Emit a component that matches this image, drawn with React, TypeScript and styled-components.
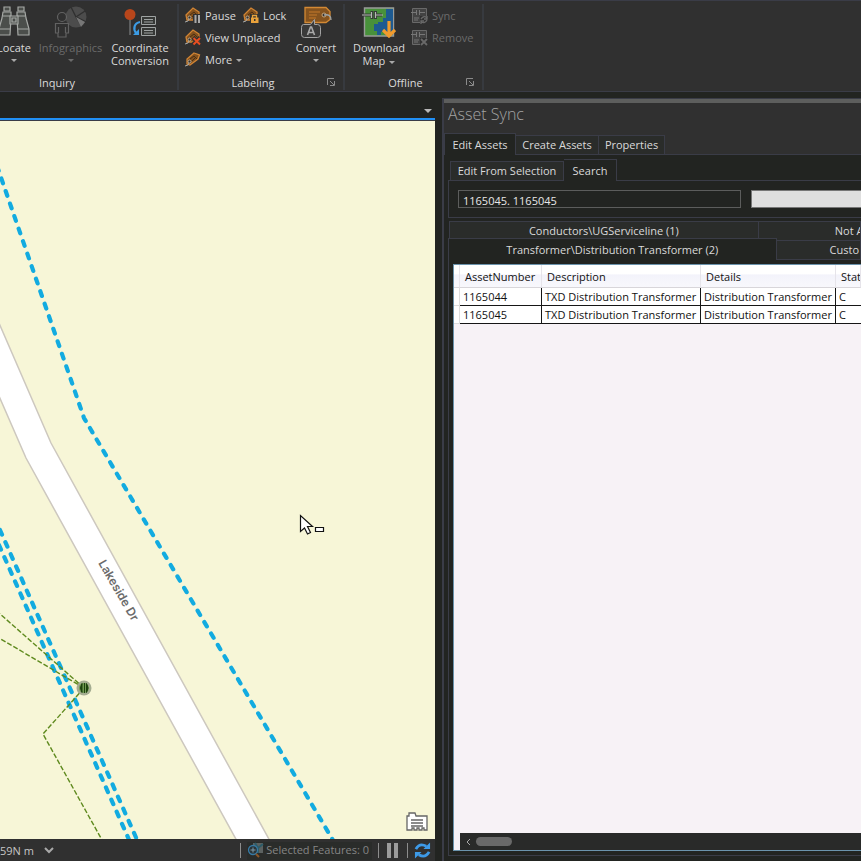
import React from 'react';
import styled, { createGlobalStyle, css } from 'styled-components';

const c = {
  bar: '#303030',
  dark: '#222421',
  tab: '#2a2c2a',
  line: '#3a3c47',
  text: '#dadada',
  dim: '#6b6b6b',
  accent: '#2190f5',
};

const Global = createGlobalStyle`
  * { box-sizing: border-box; }
  html, body { margin: 0; background: ${c.dark}; }
  body, button, input, table {
    font-family: "Open Sans", "Noto Sans", sans-serif;
    font-size: 11px;
    line-height: 13px;
  }
  button { margin: 0; padding: 0; border: 0; background: none; color: inherit; text-align: inherit; white-space: nowrap; }
  svg { display: block; flex: none; }
`;

const Shell = styled.div`
  display: grid;
  grid-template-rows: auto minmax(0, 1fr);
  height: 100vh;
  overflow: hidden;
  background: ${c.dark};
  color: ${c.text};
`;

/* ---------- ribbon ---------- */

const Ribbon = styled.header`
  display: flex;
  border-top: 1px solid ${c.line};
  border-bottom: 1px solid ${c.line};
  background: ${c.bar};
`;

const Group = styled.section<{ $width: number }>`
  display: grid;
  grid-template-columns: minmax(0, 1fr);
  grid-template-rows: 71px 16px;
  flex: none;
  width: ${(p) => p.$width}px;
  padding: 2px 0 1px;
  overflow: hidden;
  border-right: 2px solid #373a3f;
  border-image: linear-gradient(transparent 4px, #373a3f 4px, #373a3f 88px, transparent 88px) 1;
`;

const Tools = styled.div<{ $end?: boolean }>`
  display: flex;
  align-items: flex-start;
  justify-content: ${(p) => (p.$end ? 'flex-end' : 'flex-start')};
  gap: 4px;
  padding: 0 6px;
`;

const GroupFoot = styled.div<{ $reserve?: number }>`
  display: grid;
  grid-template-columns: 1fr ${(p) => p.$reserve ?? 16}px;
  align-items: center;
  text-align: center;
`;

const Large = styled.button<{ $width: number }>`
  display: flex;
  flex: none;
  flex-direction: column;
  align-items: center;
  width: ${(p) => p.$width}px;
  text-align: center;
  &:disabled { color: ${c.dim}; }
  svg { margin: 1px 0 3px; }
`;

const Arrow = styled.span<{ $inline?: boolean }>`
  border: 3px solid transparent;
  border-top-color: #a9a9a9;
  border-bottom: 0;
  ${(p) => (p.$inline ? css`display: inline-block; margin-left: 4px; vertical-align: middle;` : css`margin-top: 5px;`)}
  button:disabled & { border-top-color: #6b6b6b; }
`;

const SmallStack = styled.div<{ $width: number }>`
  display: flex;
  flex: none;
  flex-direction: column;
  width: ${(p) => p.$width}px;
  padding-top: 2px;
`;

const SmallRow = styled.div`
  display: flex;
  gap: 7px;
  height: 22px;
`;

const Small = styled.button`
  display: flex;
  align-items: center;
  gap: 4px;
  height: 20px;
  &:disabled { color: ${c.dim}; }
`;

const Binoculars = () => (
  <svg width="32" height="34" viewBox="0 0 32 34" fill="#4b4e4b" stroke="#a5a8a5" strokeWidth="1.2">
    <path d="M6 3h6v4h-6zM20 3h6v4h-6z" />
    <path d="M5 8h8v6l-1 17H1V25l3-11zM19 8h8l1 6 3 11v6H20l-1-17z" />
    <path d="M1 25h11M20 25h11M5 12h8M19 12h8" />
    <path d="M12 12h8v8h-8zM14 14h4v4h-4z" />
  </svg>
);

const Infographics = () => (
  <svg width="34" height="34" viewBox="0 0 34 34" fill="none" stroke="#626262" strokeWidth="1.2">
    <circle cx="22" cy="13" r="10.5" fill="#4c4c4c" stroke="none" />
    <path d="M22 13 17 3M22 13l9-6M22 13l10 5M22 13l6 10" stroke="#303030" strokeWidth="1.4" />
    <path d="M22 13l9 5-4 5z" fill="#777" stroke="none" />
    <circle cx="8" cy="13" r="4.5" fill="#303030" />
    <path d="M1.500 19.500h13V29H12v4H4v-4H1.500zM4.500 23v6M11.500 23v6" fill="#303030" />
  </svg>
);

const Coordinate = () => (
  <svg width="34" height="34" viewBox="0 0 34 34" fill="none">
    <path d="M7 12v19" stroke="#8b8f90" />
    <circle cx="7" cy="10.500" r="5.500" fill="#b8461b" />
    <path d="M17 18c-6 1-7 7-4 11" stroke="#3b9be4" strokeWidth="2.200" />
    <path d="M10 31h6v-6z" fill="#3b9be4" />
    <path d="M18.500 12.500h14v8h-14zM18.500 23.500h14v8h-14z" stroke="#9fa3a3" fill="#363836" />
    <path d="M21 15.500h9M21 18h9M21 26.500h9M21 29h9" stroke="#9fa3a3" />
  </svg>
);

const TagIcon = ({ kind }: { kind: 'pause' | 'lock' | 'remove' | 'more' }) => (
  <svg width="16" height="18" viewBox="0 0 16 18" fill="none">
    <path
      d={kind === 'more' ? 'M9 3 14.500 5 13 9 5 15 2 14 2 9z' : 'M1 9 8 2l6 4v8H2z'}
      fill="#83511d" stroke="#d08434" strokeWidth="1.300"
    />
    <path d="M5 9l4-3 3 3M7 11l4-4" stroke="#4a2f14" />
    <path d="M0 16l3-1 2-4" stroke="#a5a8a8" />
    <circle cx="4.500" cy="11.500" r="1.500" fill="#303030" stroke="#b7a791" />
    {kind === 'pause' && <path d="M8 8h8v10H8z" fill="#303030" />}
    {kind === 'pause' && <path d="M10.500 9v8M14 9v8" stroke="#a9a9a9" strokeWidth="2" />}
    {kind === 'lock' && <path d="M7 8h9v10H7z" fill="#303030" />}
    {kind === 'lock' && <path d="M9.500 12V9.500h4V12" stroke="#e9a23b" strokeWidth="1.300" />}
    {kind === 'lock' && <path d="M8 11.500h7.500V17H8zM11 13h1.500v2H11z" fill="#e9a23b" fillRule="evenodd" />}
    {kind === 'remove' && <path d="M8 9.500l7 7M15 9.500l-7 7" stroke="#303030" strokeWidth="4" />}
    {kind === 'remove' && <path d="M8.500 10l6.500 6.500M15 10l-6.500 6.500" stroke="#e84e21" strokeWidth="2" />}
  </svg>
);

const ConvertIcon = () => (
  <svg width="32" height="34" viewBox="0 0 32 34" fill="none">
    <path d="M5 3.500h21l4 4v8l-4 3H5z" fill="#85531e" stroke="#d38934" strokeWidth="1.300" />
    <path d="M9 8h11M9 11h8M9 14h7" stroke="#c47b2b" />
    <circle cx="24" cy="11" r="2" fill="#303030" stroke="#c9a77a" />
    <path d="M24 11c5-1 7 1 7 5" stroke="#9fa3a3" strokeWidth="1.300" />
    <path d="M3.500 20.500h7l4-5v5h3q3 0 3 3v7q0 3-3 3h-13q-3 0-3-3v-7q0-3 2-3z" fill="#3a3a3a" stroke="#a3a3a3" />
    <path d="M7.500 31l3-8h1l3 8M8.500 28.500h5" stroke="#a9a9a9" strokeWidth="1.600" />
  </svg>
);

const DownloadIcon = () => (
  <svg width="34" height="34" viewBox="0 0 34 34" fill="none">
    <path d="M2.500 4h29v28h-29z" fill="#48913b" stroke="#999c99" strokeWidth="1.400" />
    <path d="M24 5h7v26h-8v-3h-4v3h-4v-4h-3v-7h4v-2h5v-4h3z" fill="#1d5a91" />
    <path d="M1 11h9M14 11h6M10 7v8M13.500 7v8M20 11h-6" stroke="#353b35" strokeWidth="3" />
    <path d="M0 11h9M14 11h7M9.500 8v6M13.500 8v6" stroke="#b5b9b5" strokeWidth="1.200" />
    <path d="M27 17v14M21 26l6 6 6-6" stroke="#f19b2c" strokeWidth="3.200" />
  </svg>
);

const OfflineIcon = ({ remove }: { remove?: boolean }) => (
  <svg width="17" height="17" viewBox="0 0 17 17" fill="none" stroke="#696969">
    <path d="M1.500 1.500h14v14h-14z" fill="#434343" />
    <path d="M0 5.500h5M8 5.500h6M5.500 3v5M8.500 3v5M3 11h5M3 13h4" stroke="#777" />
    <path d="M9 9h8v8H9z" fill="#303030" stroke="none" />
    {remove
      ? <path d="M10 10l6 6M16 10l-6 6" strokeWidth="1.800" />
      : <path d="M10 12q3-4 6-1M16 9v3h-3M16 13q-2 4-6 2M10 17v-3h3" strokeWidth="1.300" />}
  </svg>
);

const LauncherIcon = () => (
  <svg width="8" height="8" viewBox="0 0 8 8" fill="none" stroke="#8b8b8b">
    <path d="M.5 7V.5H7M3 3l4 4M7.500 3v4.500H3" />
  </svg>
);

/* ---------- workspace ---------- */

const Workspace = styled.main`
  display: grid;
  grid-template-columns: minmax(0, 435fr) minmax(0, 419fr);
  gap: 7px;
  min-height: 0;
`;

const MapPane = styled.section`
  display: grid;
  grid-template-rows: 26px minmax(0, 1fr) 22px;
  min-height: 0;
`;

const ViewBar = styled.div`
  display: flex;
  align-items: center;
  justify-content: flex-end;
  padding: 12px 3px 0;
`;

const ViewMenu = styled.button`
  border: 4px solid transparent;
  border-top-color: #b9b9b9;
  border-bottom: 0;
`;

const MapView = styled.div`
  position: relative;
  min-height: 0;
  overflow: hidden;
  border-top: 2px solid ${c.accent};
  background: #f7f6d7;
`;

const MapDrawing = styled.svg`
  width: 100%;
  height: 100%;
`;

const MapNotes = styled.button`
  position: absolute;
  right: 7px;
  bottom: 7px;
`;

const Status = styled.footer`
  display: flex;
  align-items: center;
  gap: 6px;
  padding: 1px 4px 0 0;
  background: ${c.bar};
  color: #c6c6c6;
`;

const Units = styled.button`
  display: flex;
  align-items: center;
  gap: 10px;
  margin-right: auto;
`;

const Rule = styled.span`
  width: 1px;
  height: 15px;
  background: #8d8d8d;
`;

const Selected = styled.div`
  display: flex;
  align-items: center;
  gap: 2px;
  padding: 0 3px 2px 0;
  background: #2a2c2a;
  color: #858585;
`;

/* ---------- asset panel ---------- */

const Panel = styled.aside`
  display: flex;
  flex-direction: column;
  min-width: 0;
  min-height: 0;
  margin-top: 6px;
  overflow: hidden;
  border-left: 2px solid ${c.line};
  border-top: 1px solid ${c.line};
`;

const PanelHead = styled.div`
  border-top: 4px solid #5d5e5d;
  background: ${c.bar};
`;

const Title = styled.h2`
  margin: 0;
  padding: 0 4px;
  color: #a3a3a3;
  font-size: 16px;
  font-weight: 300;
  line-height: 22px;
`;

const TabList = styled.div<{ $top: number; $left?: number }>`
  display: flex;
  align-items: flex-end;
  padding: ${(p) => p.$top}px 0 0 ${(p) => p.$left ?? 0}px;
  box-shadow: inset 0 -1px ${c.line};
`;

const Tab = styled.button<{ $width: number; $grow?: boolean; $lead?: number }>`
  flex: ${(p) => (p.$grow ? `${p.$width} 1 0` : `0 0 ${p.$width}px`)};
  min-width: 0;
  height: 20px;
  overflow: hidden;
  border: 1px solid ${c.line};
  border-left-width: 0;
  background: ${c.tab};
  text-align: ${(p) => (p.$lead ? 'left' : 'center')};
  text-indent: ${(p) => p.$lead ?? 0}px;
  line-height: 18px;
  &:first-child { border-left-width: 1px; }
  &[aria-selected='true'] {
    height: 22px;
    border-bottom: 0;
    background: ${c.dark};
    line-height: 21px;
  }
`;

const PanelBody = styled.div`
  display: flex;
  flex: 1;
  flex-direction: column;
  min-height: 0;
  padding: 4px 0 5px 4px;
`;

const SearchBox = styled.div`
  display: flex;
  gap: 10px;
  padding: 9px 0 9px 9px;
  border-left: 1px solid ${c.line};
  border-bottom: 1px solid ${c.line};
`;

const SearchInput = styled.input`
  flex: 273 1 0;
  min-width: 0;
  height: 18px;
  padding: 2px 4px 0;
  border: 1px solid #5c5d5c;
  border-radius: 0;
  outline: 0;
  background: ${c.dark};
  color: #e8e8e8;
`;

const SearchButton = styled.button`
  flex: 109 1 0;
  height: 18px;
  border: 1px solid #777;
  border-right: 0;
  background: #dfdfdf;
`;

const LayerTabs = styled.div`
  display: flex;
  align-items: flex-start;
  padding-left: 1px;
  height: 17px;
  margin-top: 3px;
`;

const FrontTabs = styled(LayerTabs)`
  height: 22px;
  margin-top: 0;
  padding-left: 0;
  align-items: flex-end;
`;

const Result = styled.div`
  display: flex;
  flex: 1;
  min-height: 0;
  padding: 4px 0 4px 4px;
  border-left: 1px solid ${c.line};
  border-bottom: 1px solid ${c.line};
`;

const GridFrame = styled.div`
  display: flex;
  flex: 1;
  flex-direction: column;
  min-width: 0;
  overflow: hidden;
  border: 1px solid #6b93ac;
  border-right: 0;
  background: #f7f2f6;
  color: #111;
`;

const Table = styled.table`
  width: 100%;
  table-layout: fixed;
  border-spacing: 0;
  white-space: nowrap;
`;

const Col = styled.col<{ $width?: number }>`
  width: ${(p) => (p.$width ? `${p.$width}px` : 'auto')};
`;

const Th = styled.th`
  height: 23px;
  padding: 0 5px;
  overflow: hidden;
  border-right: 1px solid #e6e4ea;
  border-bottom: 1px solid #d8d6da;
  background: linear-gradient(#fff 40%, #f3f3fb 45%, #f8f8fc);
  font-weight: 400;
  text-align: left;
`;

const Td = styled.td<{ $head?: boolean }>`
  height: 18px;
  padding: 0 0 0 3px;
  overflow: hidden;
  border-right: 1px solid #161616;
  border-bottom: 1px solid #161616;
  background: #fff;
  ${(p) => p.$head && css`border-right-color: #ddd; border-bottom-color: #ddd;`}
  &:last-child { border-right: 0; }
`;

const ScrollTrack = styled.div`
  display: flex;
  align-items: center;
  gap: 5px;
  height: 17px;
  margin: auto 0 0 6px;
  padding-left: 6px;
  background: #292a29;
`;

const ScrollThumb = styled.div`
  width: 36px;
  height: 9px;
  border-radius: 5px;
  background: #696969;
`;

const columns: { name: string; width?: number }[] = [
  { name: 'AssetNumber', width: 82 },
  { name: 'Description', width: 159 },
  { name: 'Details', width: 135 },
  { name: 'Stat' },
];

const rows = [
  ['1165044', 'TXD Distribution Transformer', 'Distribution Transformer', 'C'],
  ['1165045', 'TXD Distribution Transformer', 'Distribution Transformer', 'C'],
];

const StreetName = styled.text`
  font: 600 12px Inter, "Liberation Sans", sans-serif;
  fill: #6b6b6b;
`;

const SiteMap = () => (
  <MapDrawing viewBox="0 120 435 719" preserveAspectRatio="xMinYMin slice" fill="none">
    <path d="M-1 323 0 325 51 443 270 841H237L26 458-1 396z" fill="#fff" />
    <path d="M-1 323 51 443 270 841M-1 396 26 458 237 841" stroke="#cdc8bf" strokeWidth="1.500" />
    <g stroke="#12abe0" strokeWidth="4.200" strokeLinecap="round" strokeDasharray="5 8.250">
      <path d="M-3 166 71 380 84 418 334 842" />
      <path d="M0 530 138 842" />
      <path d="M-1 545 130 842" />
    </g>
    <g stroke="#5f8a1e" strokeWidth="1.400" strokeDasharray="5 2">
      <path d="M84 688-1 613" />
      <path d="M84 688-1 638" />
      <path d="M84 688 43 734 102 840" />
    </g>
    <circle cx="84" cy="688" r="7.500" fill="#8f9a80" fillOpacity=".8" />
    <circle cx="84" cy="688" r="5" fill="#6f9a50" />
    <path d="M82 683.500q-3 4.500 0 9zM86.500 683.500q3 4.500 0 9z" fill="#1e4210" stroke="#1e4210" />
    <path d="M84.500 683v10" stroke="#1e4210" />
    <StreetName transform="translate(98 563) rotate(60)">Lakeside Dr</StreetName>
    <path d="M300.500 515.500v16l4-3.500 3 6 3-1.500-3-6h5z" fill="#fff" stroke="#111" strokeWidth="1.200" />
    <path d="M315.500 527.500h8v4h-8z" fill="#fff" stroke="#111" strokeWidth="1.200" />
    <path d="M0 120.500h2000" stroke={c.line} />
  </MapDrawing>
);

export default function App() {
  return (
    <Shell>
      <Global />
      <Ribbon>
        <Group $width={179}>
          <Tools $end>
            <Large $width={36}><Binoculars />Locate<Arrow /></Large>
            <Large $width={69} disabled><Infographics />Infographics<Arrow /></Large>
            <Large $width={62}><Coordinate /><span>Coordinate<br />Conversion</span></Large>
          </Tools>
          <GroupFoot $reserve={63}><span>Inquiry</span></GroupFoot>
        </Group>
        <Group $width={166}>
          <Tools>
            <SmallStack $width={105}>
              <SmallRow>
                <Small><TagIcon kind="pause" />Pause</Small>
                <Small><TagIcon kind="lock" />Lock</Small>
              </SmallRow>
              <SmallRow><Small><TagIcon kind="remove" />View Unplaced</Small></SmallRow>
              <SmallRow><Small><TagIcon kind="more" /><span>More<Arrow $inline /></span></Small></SmallRow>
            </SmallStack>
            <Large $width={44}><ConvertIcon />Convert<Arrow /></Large>
          </Tools>
          <GroupFoot>
            <span>Labeling</span>
            <button aria-label="Labeling options"><LauncherIcon /></button>
          </GroupFoot>
        </Group>
        <Group $width={139}>
          <Tools>
            <Large $width={56}><DownloadIcon /><span>Download<br />Map<Arrow $inline /></span></Large>
            <SmallStack $width={66}>
              <SmallRow><Small disabled><OfflineIcon />Sync</Small></SmallRow>
              <SmallRow><Small disabled><OfflineIcon remove />Remove</Small></SmallRow>
            </SmallStack>
          </Tools>
          <GroupFoot>
            <span>Offline</span>
            <button aria-label="Offline options"><LauncherIcon /></button>
          </GroupFoot>
        </Group>
      </Ribbon>

      <Workspace>
        <MapPane>
          <ViewBar><ViewMenu aria-label="Open views" /></ViewBar>
          <MapView>
            <SiteMap />
            <MapNotes aria-label="Map notes">
              <svg width="22" height="20" viewBox="0 0 22 20" fill="#fff" stroke="#666" strokeWidth="1.300">
                <path d="M1 18V4h2V1h6l1 3h11v14h-3v-2h-2v2h-3v-2h-2v2H8v-2H6v2z" />
                <path d="M5 8h12M5 11h12M5 14h12" />
              </svg>
            </MapNotes>
          </MapView>
          <Status>
            <Units>
              59N m
              <svg width="10" height="7" viewBox="0 0 10 7" fill="none" stroke="#a9a9a9" strokeWidth="2"><path d="M1 1l4 4 4-4" /></svg>
            </Units>
            <Rule />
            <Selected>
              <svg width="17" height="16" viewBox="0 0 17 16" fill="none">
                <path d="M6 1h10v10H6z" fill="#5c6261" />
                <path d="M8 1l3 5 5-4M11 6v5" stroke="#2d5c68" strokeWidth="2" />
                <circle cx="6" cy="8" r="4.500" fill="#2a3438" stroke="#377aa5" strokeWidth="1.300" />
                <path d="M3.500 8h5M6 5.500v5" stroke="#7c9aa8" />
                <path d="M9 12l3 3" stroke="#8a5729" strokeWidth="2" />
              </svg>
              Selected Features: 0
            </Selected>
            <Rule />
            <button aria-label="Pause drawing">
              <svg width="16" height="15" viewBox="0 0 16 15"><path d="M2 0h4v15H2zM9 0h4v15H9z" fill="#9b9b9b" /></svg>
            </button>
            <Rule />
            <button aria-label="Refresh">
              <svg width="17" height="17" viewBox="0 0 18 17" fill="none" stroke="#3d9ae8" strokeWidth="3">
                <path d="M2 7q4-7 11-3M16 10q-4 7-11 3" />
                <path d="M17 0v7h-7zM1 17v-7h7z" fill="#3d9ae8" stroke="none" />
              </svg>
            </button>
          </Status>
        </MapPane>

        <Panel>
          <PanelHead>
            <Title>Asset Sync</Title>
            <TabList role="tablist" $top={8}>
              <Tab role="tab" aria-selected $width={72}>Edit Assets</Tab>
              <Tab role="tab" $width={83}>Create Assets</Tab>
              <Tab role="tab" $width={66}>Properties</Tab>
            </TabList>
          </PanelHead>
          <PanelBody>
            <TabList role="tablist" $top={0} $left={2}>
              <Tab role="tab" $width={114}>Edit From Selection</Tab>
              <Tab role="tab" aria-selected $width={53}>Search</Tab>
            </TabList>
            <SearchBox>
              <SearchInput aria-label="Asset numbers" defaultValue="1165045. 1165045" />
              <SearchButton aria-label="Run search" />
            </SearchBox>
            <LayerTabs role="tablist">
              <Tab role="tab" $grow $width={310}>Conductors\UGServiceline (1)</Tab>
              <Tab role="tab" $grow $width={102} $lead={76}>Not A</Tab>
            </LayerTabs>
            <FrontTabs role="tablist">
              <Tab role="tab" aria-selected $grow $width={329}>Transformer\Distribution Transformer (2)</Tab>
              <Tab role="tab" $grow $width={84} $lead={53}>Custo</Tab>
            </FrontTabs>
            <Result>
              <GridFrame>
                <Table>
                  <colgroup>
                    <Col $width={6} />
                    {columns.map((col) => <Col key={col.name} $width={col.width} />)}
                  </colgroup>
                  <thead>
                    <tr>
                      <Th aria-label="Row" />
                      {columns.map((col) => <Th key={col.name} scope="col">{col.name}</Th>)}
                    </tr>
                  </thead>
                  <tbody>
                    {rows.map((row) => (
                      <tr key={row[0]}>
                        <Td $head />
                        {row.map((value, i) => <Td key={columns[i].name}>{value}</Td>)}
                      </tr>
                    ))}
                  </tbody>
                </Table>
                <ScrollTrack>
                  <svg width="5" height="8" viewBox="0 0 5 8" fill="none" stroke="#a9a9a9"><path d="M4 1 1 4l3 3" /></svg>
                  <ScrollThumb />
                </ScrollTrack>
              </GridFrame>
            </Result>
          </PanelBody>
        </Panel>
      </Workspace>
    </Shell>
  );
}
